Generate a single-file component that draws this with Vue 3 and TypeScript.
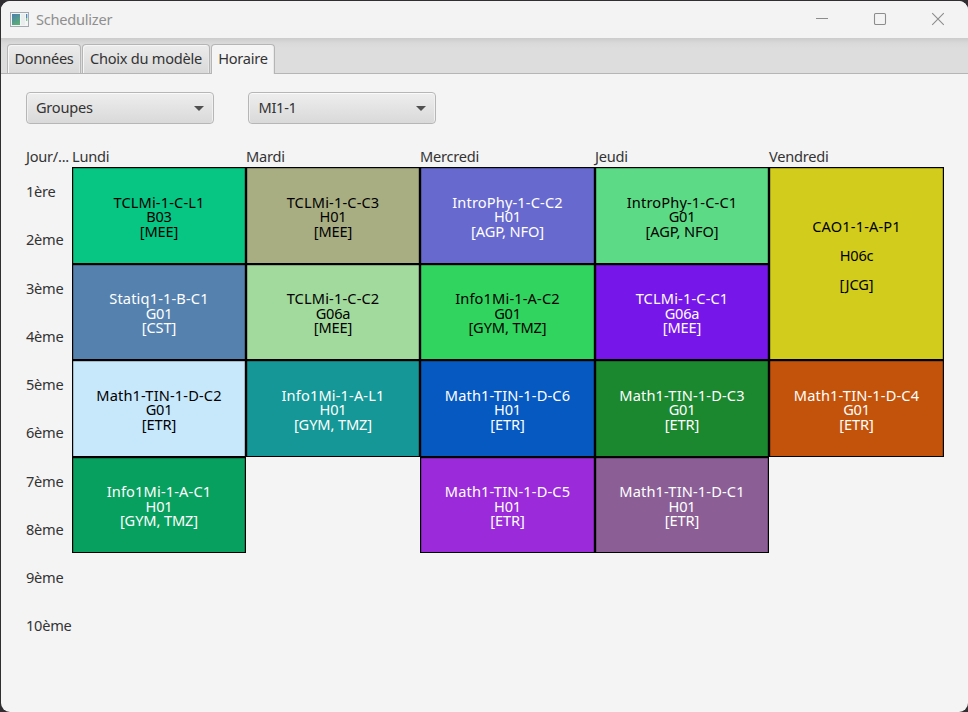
<script setup lang="ts">
interface Course {
  name: string
  room: string
  staff: string
  tone: string
}

interface Day {
  label: string
  courses: Course[]
}

const tabs: string[] = ['Données', 'Choix du modèle', 'Horaire']
const activeTab = 'Horaire'
const selectors: string[] = ['Groupes', 'MI1-1']
const periods: string[] = ['1ère', '2ème', '3ème', '4ème', '5ème', '6ème', '7ème', '8ème', '9ème', '10ème']

const days: Day[] = [
  {
    label: 'Lundi',
    courses: [
      { name: 'TCLMi-1-C-L1', room: 'B03', staff: '[MEE]', tone: 'jade' },
      { name: 'Statiq1-1-B-C1', room: 'G01', staff: '[CST]', tone: 'steel light' },
      { name: 'Math1-TIN-1-D-C2', room: 'G01', staff: '[ETR]', tone: 'sky' },
      { name: 'Info1Mi-1-A-C1', room: 'H01', staff: '[GYM, TMZ]', tone: 'emerald light' },
    ],
  },
  {
    label: 'Mardi',
    courses: [
      { name: 'TCLMi-1-C-C3', room: 'H01', staff: '[MEE]', tone: 'khaki' },
      { name: 'TCLMi-1-C-C2', room: 'G06a', staff: '[MEE]', tone: 'pale' },
      { name: 'Info1Mi-1-A-L1', room: 'H01', staff: '[GYM, TMZ]', tone: 'teal light' },
    ],
  },
  {
    label: 'Mercredi',
    courses: [
      { name: 'IntroPhy-1-C-C2', room: 'H01', staff: '[AGP, NFO]', tone: 'indigo light' },
      { name: 'Info1Mi-1-A-C2', room: 'G01', staff: '[GYM, TMZ]', tone: 'green' },
      { name: 'Math1-TIN-1-D-C6', room: 'H01', staff: '[ETR]', tone: 'blue light' },
      { name: 'Math1-TIN-1-D-C5', room: 'H01', staff: '[ETR]', tone: 'purple light' },
    ],
  },
  {
    label: 'Jeudi',
    courses: [
      { name: 'IntroPhy-1-C-C1', room: 'G01', staff: '[AGP, NFO]', tone: 'mint' },
      { name: 'TCLMi-1-C-C1', room: 'G06a', staff: '[MEE]', tone: 'violet light' },
      { name: 'Math1-TIN-1-D-C3', room: 'G01', staff: '[ETR]', tone: 'forest light' },
      { name: 'Math1-TIN-1-D-C1', room: 'H01', staff: '[ETR]', tone: 'mauve light' },
    ],
  },
  {
    label: 'Vendredi',
    courses: [
      { name: 'CAO1-1-A-P1', room: 'H06c', staff: '[JCG]', tone: 'yellow tall' },
      { name: 'Math1-TIN-1-D-C4', room: 'G01', staff: '[ETR]', tone: 'orange light' },
    ],
  },
]
</script>

<template>
  <div class="desktop">
    <div class="window">
      <header class="titlebar">
        <svg class="app-icon" width="19" height="15" viewBox="0 0 19 15">
          <defs>
            <linearGradient id="pane" x1="0" y1="0" x2="0.5" y2="1">
              <stop offset="0" stop-color="#4a7eb0" />
              <stop offset="1" stop-color="#5aac78" />
            </linearGradient>
          </defs>
          <rect x="0.5" y="0.5" width="18" height="14" fill="#f4f5f6" stroke="#a4abb0" />
          <rect x="2" y="2" width="8" height="11" fill="url(#pane)" />
          <rect x="11" y="2" width="4" height="11" fill="#e9edee" />
          <rect x="16" y="2" width="1.3" height="4" fill="#4f86b8" />
          <rect x="16" y="6" width="1.3" height="3" fill="#8bc79c" />
        </svg>
        <span class="title">Schedulizer</span>
        <div class="controls">
          <svg width="14" height="14" viewBox="0 0 14 14"><path d="M1 6.5H13" /></svg>
          <svg width="14" height="14" viewBox="0 0 14 14"><rect x="1.5" y="1.5" width="11" height="11" rx="1.2" /></svg>
          <svg width="14" height="14" viewBox="0 0 14 14"><path d="M1.2 1.2L12.8 12.8M12.8 1.2L1.2 12.8" /></svg>
        </div>
      </header>
      <nav class="tabs">
        <div v-for="tab in tabs" :key="tab" class="tab" :class="{ active: tab === activeTab }">
          <span>{{ tab }}</span>
        </div>
      </nav>
      <main class="content">
        <div class="selectors">
          <div v-for="value in selectors" :key="value" class="combo">
            <span>{{ value }}</span>
            <svg width="10" height="5" viewBox="0 0 10 5"><path d="M0 0H10L5 5Z" /></svg>
          </div>
        </div>
        <div class="schedule">
          <div class="column">
            <div class="heading">Jour/...</div>
            <div v-for="period in periods" :key="period" class="period">{{ period }}</div>
          </div>
          <div v-for="day in days" :key="day.label" class="column">
            <div class="heading">{{ day.label }}</div>
            <div class="slots">
              <div v-for="course in day.courses" :key="course.name" class="course" :class="course.tone">
                <span class="name">{{ course.name }}</span>
                <span>{{ course.room }}</span>
                <span class="staff">{{ course.staff }}</span>
              </div>
            </div>
          </div>
        </div>
      </main>
    </div>
  </div>
</template>

<style>
body {
  margin: 0;
  background: #1f1d1e;
}
</style>

<style scoped>
.desktop {
  box-sizing: border-box;
  width: 968px;
  height: 712px;
  padding: 1px 0 0 1px;
  overflow: hidden;
  background: #302e30;
  font-family: "Noto Sans", "Open Sans", sans-serif;
  font-size: 14.6px;
  letter-spacing: -0.25px;
  color: #333;
  white-space: nowrap;
}
.window {
  height: 711px;
  border-radius: 9px;
  overflow: hidden;
  background: #f4f4f4;
}
.titlebar {
  height: 37px;
  display: flex;
  align-items: center;
  padding: 0 23px 0 9px;
  background: #f3f3f3;
}
.title {
  margin: 0 0 2px 7px;
  color: #8f8f8f;
}
.controls {
  margin: 0 0 1px auto;
  display: flex;
  gap: 45px;
}
.controls svg {
  fill: none;
  stroke: #8c8c8c;
  stroke-width: 1.1;
}
.controls svg:last-child {
  margin-left: -1px;
}
.controls svg:nth-child(2) {
  margin-left: -1px;
}
.tabs {
  box-sizing: border-box;
  height: 36px;
  display: flex;
  align-items: flex-end;
  gap: 1px;
  padding-left: 6px;
  background: linear-gradient(#cbcbcb, #d9d9d9 5px, #dddddd 10px);
  border-bottom: 1px solid #b5b5b5;
}
.tab {
  box-sizing: border-box;
  height: 29px;
  width: 74px;
  display: flex;
  align-items: center;
  justify-content: center;
  padding-bottom: 2px;
  border: 1px solid #b5b5b5;
  border-bottom: 0;
  border-radius: 4px 4px 0 0;
  background: linear-gradient(#ececec, #d9d9d9);
  box-shadow: inset 1px 1px 0 #f6f6f6, inset -1px 0 0 #e8e8e8;
}
.tab:nth-child(2) {
  width: 128px;
}
.tab.active {
  width: 64px;
  height: 30px;
  margin-bottom: -1px;
  padding-bottom: 3px;
  background: #f4f4f4;
}
.content {
  padding: 18px 0 0 25px;
}
.selectors {
  display: flex;
  gap: 34.4px;
}
.combo {
  box-sizing: border-box;
  width: 188px;
  height: 32px;
  display: flex;
  align-items: center;
  justify-content: space-between;
  padding: 0 9px 0 9px;
  border: 1px solid #b6b6b6;
  border-radius: 4px;
  background: linear-gradient(#eeeeee, #d9d9d9);
  box-shadow: inset 0 1px 0 #fafafa, inset 1px 0 0 #f0f0f0, inset -1px 0 0 #f0f0f0;
}
.combo span {
  margin-bottom: 2px;
}
.combo svg {
  fill: #505050;
}
.schedule {
  display: grid;
  grid-template-columns: 46px 174px 174px 175px 174px 175px;
  margin-top: 22px;
}
.heading {
  height: 21px;
  line-height: 21px;
}
.period {
  height: 48.25px;
  line-height: 49px;
}
.slots {
  display: grid;
  grid-template-rows: 97px 96px 97px 96px;
}
.course {
  box-sizing: border-box;
  display: flex;
  flex-direction: column;
  align-items: center;
  justify-content: center;
  padding-top: 2px;
  border: 1px solid #000;
  line-height: 14.5px;
  color: #000;
  box-shadow: inset 0 1px 0 rgba(0, 0, 0, 0.2), inset 1px 0 0 rgba(0, 0, 0, 0.2), inset -1px 0 0 rgba(0, 0, 0, 0.2);
}
.name {
  letter-spacing: 0.15px;
}
.staff {
  letter-spacing: -0.1px;
}
.light {
  color: #fff;
}
.tall {
  grid-row: span 2;
  line-height: 29px;
  padding: 0 0 16px;
}
.jade { background: #07c684; }
.steel { background: #5581ae; }
.sky { background: #c7e7fb; }
.emerald { background: #08a05e; }
.khaki { background: #a9ae82; }
.pale { background: #a2d99c; }
.teal { background: #149796; }
.indigo { background: #6769ce; }
.green { background: #31d45f; }
.blue { background: #0659c1; }
.purple { background: #9b2bda; }
.mint { background: #5cda85; }
.violet { background: #7716e8; }
.forest { background: #1b8830; }
.mauve { background: #8b5f96; }
.yellow { background: #d2cd1c; }
.orange { background: #c3530b; }
</style>
